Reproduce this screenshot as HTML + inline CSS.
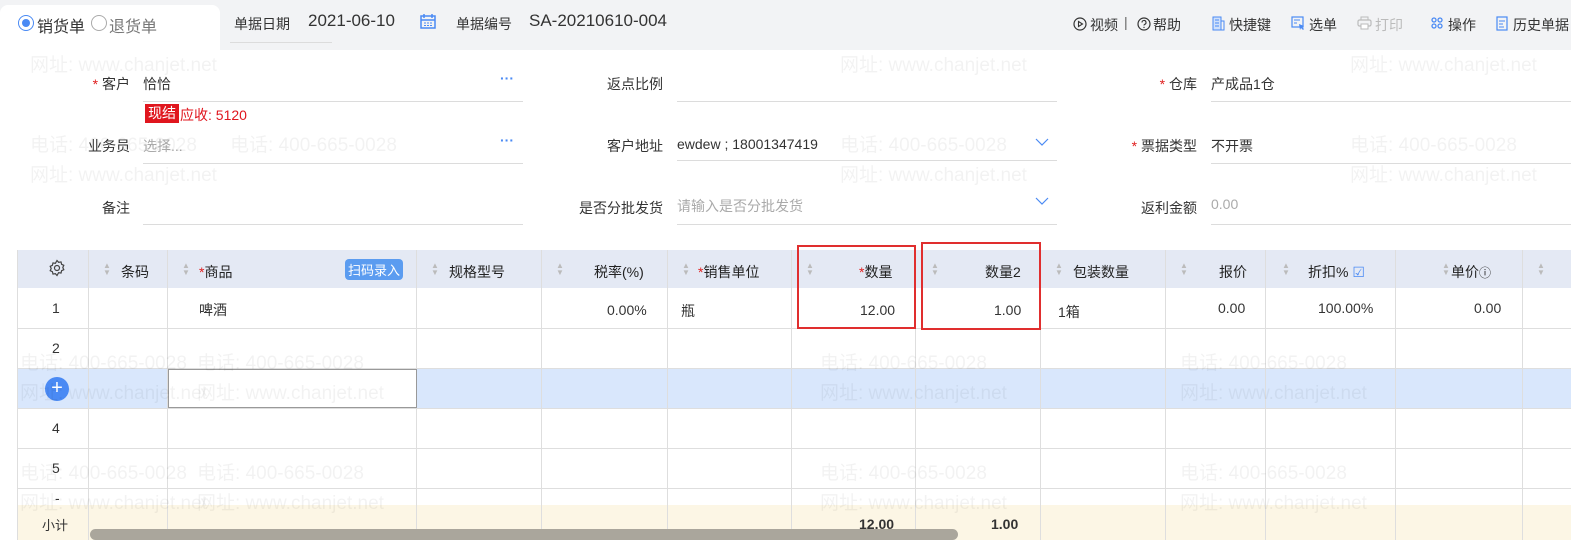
<!DOCTYPE html>
<html><head><meta charset="utf-8"><style>
*{box-sizing:border-box;margin:0;padding:0}
body{width:1571px;height:540px;overflow:hidden;background:#fff;font-family:"Liberation Sans","Noto Sans CJK SC",sans-serif;font-size:14px;color:#333;position:relative}
.a{position:absolute;white-space:nowrap}
.wm{position:absolute;color:rgba(0,0,0,0.05);font-size:19px;white-space:nowrap;z-index:5;pointer-events:none}
.lbl{position:absolute;text-align:right;width:120px}
.line{position:absolute;height:1px;background:#dcdcdc}
.r{color:#e02020}
.vl{position:absolute;width:1px;background:#dedede;top:250px;height:290px}
.hl{position:absolute;left:17px;width:1554px;height:1px;background:#dedede}
.th{position:absolute;top:262px;font-size:14px;color:#222}
.sort{position:absolute;top:262px;color:#bbb;font-size:8px;line-height:7px}
</style></head><body>
<div class="a" style="left:0;top:0;width:1571px;height:50px;background:#f2f3f5"></div>
<div class="a" style="left:0;top:5px;width:220px;height:45px;background:#fff;border-radius:8px 8px 0 0"></div>
<div class="a" style="left:18px;top:15px;width:16px;height:16px;border:1.5px solid #4a8af4;border-radius:50%"></div>
<div class="a" style="left:22px;top:19px;width:8px;height:8px;background:#4a8af4;border-radius:50%"></div>
<div class="a" style="left:37px;top:13px;font-size:16px">销货单</div>
<div class="a" style="left:91px;top:15px;width:16px;height:16px;border:1px solid #aaa;border-radius:50%"></div>
<div class="a" style="left:109px;top:13px;font-size:16px;color:#777">退货单</div>
<div class="a" style="left:234px;top:14px">单据日期</div>
<div class="a" style="left:308px;top:11px;font-size:17px">2021-06-10</div>
<div class="line" style="left:230px;top:42px;width:102px"></div>
<svg class="a" style="left:420px;top:13px" width="16" height="16" viewBox="0 0 16 16"><rect x="1" y="3" width="14" height="12" fill="none" stroke="#4a8af4" stroke-width="1.5"/><path d="M4 1v4M12 1v4M1 7h14" stroke="#4a8af4" stroke-width="1.5"/><path d="M4 10h2M7 10h2M10 10h2M4 12.5h2M7 12.5h2M10 12.5h2" stroke="#4a8af4"/></svg>
<div class="a" style="left:456px;top:14px">单据编号</div>
<div class="a" style="left:529px;top:11px;font-size:17px">SA-20210610-004</div>

<svg class="a" style="left:1073px;top:17px" width="14" height="14" viewBox="0 0 14 14"><circle cx="7" cy="7" r="6" fill="none" stroke="#333" stroke-width="1.2"/><path d="M5.5 4.5v5l4-2.5z" fill="none" stroke="#333" stroke-width="1.1"/></svg>
<div class="a" style="left:1090px;top:15px">视频</div>
<div class="a" style="left:1124px;top:14px;color:#666">|</div>
<svg class="a" style="left:1137px;top:17px" width="14" height="14" viewBox="0 0 14 14"><circle cx="7" cy="7" r="6" fill="none" stroke="#333" stroke-width="1.2"/><path d="M5 5.5a2 2 0 1 1 2.6 1.9c-.5.2-.6.5-.6 1.1" fill="none" stroke="#333" stroke-width="1.1"/><circle cx="7" cy="10.4" r=".7" fill="#333"/></svg>
<div class="a" style="left:1153px;top:15px">帮助</div>
<svg class="a" style="left:1212px;top:16px" width="13" height="15" viewBox="0 0 13 15"><rect x="1" y="1" width="8" height="13" fill="#cfe0fb" stroke="#4a8af4"/><rect x="9" y="5" width="3" height="9" fill="none" stroke="#4a8af4"/><path d="M3 4h4M3 7h4M3 10h4" stroke="#4a8af4"/></svg>
<div class="a" style="left:1229px;top:15px">快捷键</div>
<svg class="a" style="left:1291px;top:16px" width="15" height="15" viewBox="0 0 15 15"><rect x="1" y="1" width="11" height="10" fill="none" stroke="#4a8af4" stroke-width="1.2"/><path d="M3 4h6M3 7h3" stroke="#4a8af4"/><path d="M8 8l5 2-2 1 2 2-1 1-2-2-1 2z" fill="#4a8af4"/></svg>
<div class="a" style="left:1309px;top:15px">选单</div>
<svg class="a" style="left:1357px;top:16px" width="15" height="14" viewBox="0 0 15 14"><rect x="4" y="1" width="7" height="3" fill="none" stroke="#bbb"/><rect x="1" y="4" width="13" height="6" rx="1.5" fill="none" stroke="#bbb" stroke-width="1.2"/><rect x="4" y="8" width="7" height="5" fill="#fff" stroke="#bbb"/></svg>
<div class="a" style="left:1375px;top:15px;color:#bbb">打印</div>
<svg class="a" style="left:1431px;top:17px" width="12" height="12" viewBox="0 0 12 12"><g fill="none" stroke="#4a8af4" stroke-width="1.3"><circle cx="3" cy="3" r="2"/><circle cx="9" cy="3" r="2"/><circle cx="3" cy="9" r="2"/><circle cx="9" cy="9" r="2"/></g></svg>
<div class="a" style="left:1448px;top:15px">操作</div>
<svg class="a" style="left:1496px;top:16px" width="12" height="15" viewBox="0 0 12 15"><rect x="1" y="1" width="10" height="13" fill="none" stroke="#4a8af4" stroke-width="1.2"/><path d="M3 5h6M3 8h4M3 11h5" stroke="#4a8af4"/></svg>
<div class="a" style="left:1513px;top:15px">历史单据</div>

<div class="lbl" style="left:10px;top:74px"><span class="r">*</span> 客户</div>
<div class="a" style="left:143px;top:74px">恰恰</div>
<div class="a" style="left:500px;top:70px;color:#4a8af4;font-weight:bold">···</div>
<div class="line" style="left:143px;top:101px;width:380px"></div>
<div class="a" style="left:145px;top:104px;background:#e0161e;color:#fff;padding:0 3px;height:19px;line-height:19px">现结</div>
<div class="a" style="left:180px;top:105px;color:#e0161e">应收: 5120</div>
<div class="lbl" style="left:10px;top:136px">业务员</div>
<div class="a" style="left:143px;top:136px;color:#aaa">选择...</div>
<div class="a" style="left:500px;top:132px;color:#4a8af4;font-weight:bold">···</div>
<div class="line" style="left:143px;top:163px;width:380px"></div>
<div class="lbl" style="left:10px;top:198px">备注</div>
<div class="line" style="left:143px;top:224px;width:380px"></div>

<div class="lbl" style="left:543px;top:74px">返点比例</div>
<div class="line" style="left:677px;top:101px;width:380px"></div>
<div class="lbl" style="left:543px;top:136px">客户地址</div>
<div class="a" style="left:677px;top:136px">ewdew ; 18001347419</div>
<svg class="a" style="left:1035px;top:138px" width="14" height="9" viewBox="0 0 14 9"><path d="M1 1l6 6 6-6" fill="none" stroke="#4a8af4" stroke-width="1.2"/></svg>
<div class="line" style="left:677px;top:160px;width:380px"></div>
<div class="lbl" style="left:543px;top:198px">是否分批发货</div>
<div class="a" style="left:677px;top:196px;color:#aaa">请输入是否分批发货</div>
<svg class="a" style="left:1035px;top:197px" width="14" height="9" viewBox="0 0 14 9"><path d="M1 1l6 6 6-6" fill="none" stroke="#4a8af4" stroke-width="1.2"/></svg>
<div class="line" style="left:677px;top:224px;width:380px"></div>

<div class="lbl" style="left:1077px;top:74px"><span class="r">*</span> 仓库</div>
<div class="a" style="left:1211px;top:74px">产成品1仓</div>
<div class="line" style="left:1211px;top:101px;width:360px"></div>
<div class="lbl" style="left:1077px;top:136px"><span class="r">*</span> 票据类型</div>
<div class="a" style="left:1211px;top:136px">不开票</div>
<div class="line" style="left:1211px;top:163px;width:360px"></div>
<div class="lbl" style="left:1077px;top:198px">返利金额</div>
<div class="a" style="left:1211px;top:196px;color:#aaa">0.00</div>
<div class="line" style="left:1211px;top:224px;width:360px"></div>

<!-- table -->
<div class="a" style="left:17px;top:250px;width:1554px;height:38px;background:#e4e9f4"></div>
<div class="a" style="left:17px;top:368px;width:1554px;height:40px;background:#d9e7fc"></div>
<div class="a" style="left:17px;top:505px;width:1554px;height:35px;background:#fcf6e5"></div>
<div class="vl" style="left:17px"></div><div class="vl" style="left:88px"></div><div class="vl" style="left:167px"></div><div class="vl" style="left:416px"></div><div class="vl" style="left:541px"></div><div class="vl" style="left:667px"></div><div class="vl" style="left:791px"></div><div class="vl" style="left:915px"></div><div class="vl" style="left:1040px"></div><div class="vl" style="left:1165px"></div><div class="vl" style="left:1265px"></div><div class="vl" style="left:1395px"></div><div class="vl" style="left:1522px"></div>
<div class="hl" style="top:328px"></div><div class="hl" style="top:368px"></div><div class="hl" style="top:408px"></div><div class="hl" style="top:448px"></div><div class="hl" style="top:488px"></div>
<div class="a" style="left:168px;top:369px;width:249px;height:39px;background:#fff;border:1px solid #999"></div>
<svg class="a" style="left:48px;top:259px" width="18" height="18" viewBox="0 0 18 18"><path d="M9 1.5l1.6 1.8 2.4-.4.6 2.4 2.2 1-1 2.2 1 2.2-2.2 1-.6 2.4-2.4-.4L9 16.5l-1.6-1.8-2.4.4-.6-2.4-2.2-1 1-2.2-1-2.2 2.2-1 .6-2.4 2.4.4z" fill="none" stroke="#444" stroke-width="1.2"/><circle cx="9" cy="9" r="2.5" fill="none" stroke="#444" stroke-width="1.2"/></svg>
<div class="sort" style="left:103px">▲<br>▼</div><div class="th" style="left:121px">条码</div>
<div class="sort" style="left:182px">▲<br>▼</div><div class="th" style="left:199px"><span class="r">*</span>商品</div>
<div class="a" style="left:345px;top:259px;background:#5b9cf0;color:#fff;border-radius:4px;padding:1px 3px;font-size:13px">扫码录入</div>
<div class="sort" style="left:431px">▲<br>▼</div><div class="th" style="left:449px">规格型号</div>
<div class="sort" style="left:556px">▲<br>▼</div><div class="th" style="left:594px">税率(%)</div>
<div class="sort" style="left:682px">▲<br>▼</div><div class="th" style="left:698px"><span class="r">*</span>销售单位</div>
<div class="sort" style="left:806px">▲<br>▼</div><div class="th" style="left:859px"><span class="r">*</span>数量</div>
<div class="sort" style="left:931px">▲<br>▼</div><div class="th" style="left:985px">数量2</div>
<div class="sort" style="left:1055px">▲<br>▼</div><div class="th" style="left:1073px">包装数量</div>
<div class="sort" style="left:1180px">▲<br>▼</div><div class="th" style="left:1219px">报价</div>
<div class="sort" style="left:1282px">▲<br>▼</div><div class="th" style="left:1308px">折扣% <span style="color:#4a8af4">☑</span></div>
<div class="sort" style="left:1442px">▲<br>▼</div><div class="th" style="left:1451px">单价<span style="font-size:12px">ⓘ</span></div>
<div class="sort" style="left:1537px">▲<br>▼</div>

<div class="a" style="left:52px;top:300px">1</div>
<div class="a" style="left:52px;top:340px">2</div>
<div class="a" style="left:45px;top:377px;width:24px;height:24px;border-radius:50%;background:#4a8af4;color:#fff;text-align:center;line-height:22px;font-size:20px">+</div>
<div class="a" style="left:52px;top:420px">4</div>
<div class="a" style="left:52px;top:460px">5</div>
<div class="a" style="left:55px;top:490px">-</div>
<div class="a" style="left:42px;top:515px;font-size:13px">小计</div>
<div class="a" style="left:199px;top:300px">啤酒</div>
<div class="a" style="left:607px;top:302px">0.00%</div>
<div class="a" style="left:681px;top:301px">瓶</div>
<div class="a" style="left:860px;top:302px">12.00</div>
<div class="a" style="left:994px;top:302px">1.00</div>
<div class="a" style="left:1058px;top:302px">1箱</div>
<div class="a" style="left:1218px;top:300px">0.00</div>
<div class="a" style="left:1318px;top:300px">100.00%</div>
<div class="a" style="left:1474px;top:300px">0.00</div>
<div class="a" style="left:859px;top:516px;font-weight:bold">12.00</div>
<div class="a" style="left:991px;top:516px;font-weight:bold">1.00</div>
<div class="a" style="left:90px;top:529px;width:868px;height:11px;background:#aaa69c;border-radius:6px"></div>
<div class="a" style="left:797px;top:245px;width:119px;height:84px;border:2px solid #e02e2e"></div>
<div class="a" style="left:921px;top:242px;width:120px;height:88px;border:2px solid #e02e2e"></div>

<div class="wm" style="left:30px;top:50px">网址: www.chanjet.net</div>
<div class="wm" style="left:840px;top:50px">网址: www.chanjet.net</div>
<div class="wm" style="left:1350px;top:50px">网址: www.chanjet.net</div>
<div class="wm" style="left:30px;top:130px">电话: 400-665-0028</div>
<div class="wm" style="left:230px;top:130px">电话: 400-665-0028</div>
<div class="wm" style="left:840px;top:130px">电话: 400-665-0028</div>
<div class="wm" style="left:1350px;top:130px">电话: 400-665-0028</div>
<div class="wm" style="left:30px;top:160px">网址: www.chanjet.net</div>
<div class="wm" style="left:840px;top:160px">网址: www.chanjet.net</div>
<div class="wm" style="left:1350px;top:160px">网址: www.chanjet.net</div>
<div class="wm" style="left:20px;top:348px">电话: 400-665-0028</div>
<div class="wm" style="left:197px;top:348px">电话: 400-665-0028</div>
<div class="wm" style="left:820px;top:348px">电话: 400-665-0028</div>
<div class="wm" style="left:1180px;top:348px">电话: 400-665-0028</div>
<div class="wm" style="left:20px;top:378px">网址: www.chanjet.net</div>
<div class="wm" style="left:197px;top:378px">网址: www.chanjet.net</div>
<div class="wm" style="left:820px;top:378px">网址: www.chanjet.net</div>
<div class="wm" style="left:1180px;top:378px">网址: www.chanjet.net</div>
<div class="wm" style="left:20px;top:458px">电话: 400-665-0028</div>
<div class="wm" style="left:197px;top:458px">电话: 400-665-0028</div>
<div class="wm" style="left:820px;top:458px">电话: 400-665-0028</div>
<div class="wm" style="left:1180px;top:458px">电话: 400-665-0028</div>
<div class="wm" style="left:20px;top:488px">网址: www.chanjet.net</div>
<div class="wm" style="left:197px;top:488px">网址: www.chanjet.net</div>
<div class="wm" style="left:820px;top:488px">网址: www.chanjet.net</div>
<div class="wm" style="left:1180px;top:488px">网址: www.chanjet.net</div>
</body></html>
